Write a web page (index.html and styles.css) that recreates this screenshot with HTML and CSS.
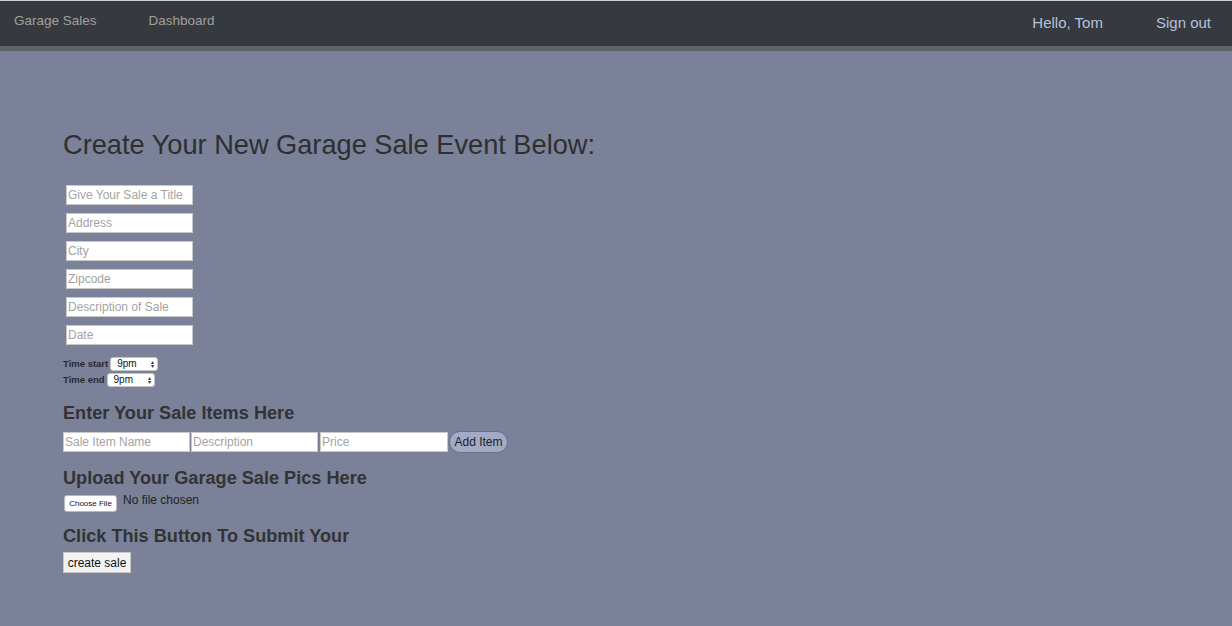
FILE: index.html
```html
<!DOCTYPE html>
<html>
<head>
<meta charset="utf-8">
<link rel="stylesheet" href="styles.css">
</head>
<body>
<nav class="navbar">
  <div class="nav-left">
    <a class="brand">Garage Sales</a>
    <a class="nav-link">Dashboard</a>
  </div>
  <div class="nav-right">
    <a class="nav-user">Hello, Tom</a>
    <a class="nav-user">Sign out</a>
  </div>
</nav>
<main class="content">
  <h1 class="title">Create Your New Garage Sale Event Below:</h1>
  <div class="fields">
    <input class="field" placeholder="Give Your Sale a Title">
    <input class="field" placeholder="Address">
    <input class="field" placeholder="City">
    <input class="field" placeholder="Zipcode">
    <input class="field" placeholder="Description of Sale">
    <input class="field" placeholder="Date">
  </div>
  <div class="times">
    <label class="time-row">Time start <span class="sel">9pm<span class="arrows">▴<br>▾</span></span></label>
    <label class="time-row">Time end <span class="sel">9pm<span class="arrows">▴<br>▾</span></span></label>
  </div>
  <h2 class="sub">Enter Your Sale Items Here</h2>
  <div class="items">
    <input class="item" placeholder="Sale Item Name">
    <input class="item" placeholder="Description">
    <input class="item" placeholder="Price">
    <button class="add">Add Item</button>
  </div>
  <h2 class="sub">Upload Your Garage Sale Pics Here</h2>
  <div class="upload">
    <span class="choose">Choose File</span>
    <span class="nofile">No file chosen</span>
  </div>
  <h2 class="sub">Click This Button To Submit Your</h2>
  <button class="create">create sale</button>
</main>
</body>
</html>
```

FILE: styles.css
```css
html, body {
  margin: 0;
  padding: 0;
}
body {
  background: #7a8199;
  font-family: "Liberation Sans", Arial, sans-serif;
  color: #333;
  height: 626px;
  overflow: hidden;
}
.navbar {
  height: 45px;
  background: #36393e;
  border-top: 1px solid #cfd1d4;
  border-bottom: 5px solid #5f6368;
  display: flex;
  justify-content: space-between;
  align-items: flex-start;
}
.nav-left, .nav-right {
  display: flex;
}
.brand, .nav-link {
  color: #a0a0a0;
  font-size: 13.5px;
  line-height: 16px;
  padding-top: 12px;
}
.brand { margin-left: 14px; }
.nav-link { margin-left: 52px; }
.nav-user {
  color: #b3c2de;
  font-size: 15px;
  line-height: 18px;
  padding-top: 13px;
}
.nav-user + .nav-user { margin-left: 53px; }
.nav-right { margin-right: 21px; }

.content {
  padding: 79px 0 0 63px;
}
.title {
  font-size: 27.2px;
  font-weight: normal;
  margin: 0;
  line-height: 30px;
  color: #2f2f30;
}
.fields {
  display: flex;
  flex-direction: column;
  gap: 8px;
  margin: 25px 0 0 3px;
}
.field {
  width: 127px;
  height: 20px;
  box-sizing: border-box;
  border: 1px solid #c8c8c8;
  background: #fff;
  font-family: "Liberation Sans", Arial, sans-serif;
  font-size: 12px;
  padding: 0 1px;
  margin: 0;
  outline: none;
}
.field::placeholder, .item::placeholder {
  color: #a3a3a3;
}
.times {
  margin-top: 11px;
  display: flex;
  flex-direction: column;
  gap: 1px;
}
.time-row {
  font-size: 9.5px;
  font-weight: bold;
  color: #2a2a2a;
  display: flex;
  align-items: center;
  gap: 2px;
  height: 15px;
}
.sel {
  display: inline-flex;
  justify-content: space-between;
  align-items: center;
  width: 48px;
  height: 14px;
  box-sizing: border-box;
  background: #fff;
  border: 1px solid #c5c5c5;
  border-radius: 3px;
  font-weight: normal;
  font-size: 10px;
  padding: 0 3px 0 6px;
  color: #111;
}
.arrows {
  font-size: 6px;
  line-height: 4px;
  color: #333;
}
.sub {
  font-size: 18.15px;
  font-weight: bold;
  margin: 0;
  line-height: 22px;
  color: #333;
}
.times + .sub { margin-top: 15px; }
.items {
  display: flex;
  align-items: center;
  margin-top: 7px;
  gap: 1px;
}
.item {
  width: 127px;
  height: 20px;
  box-sizing: border-box;
  border: 1px solid #c8c8c8;
  background: #fff;
  font-family: "Liberation Sans", Arial, sans-serif;
  font-size: 12px;
  padding: 0 1px;
  margin: 0;
}
.item:nth-child(3) { margin-left: 1px; width: 128px; }
.add {
  width: 59px;
  height: 22px;
  border-radius: 11px;
  border: 1px solid #6b7089;
  background: #a2aac6;
  font-family: "Liberation Sans", Arial, sans-serif;
  font-size: 12px;
  color: #1e1e1e;
  padding: 0;
}
.items + .sub { margin-top: 14px; }
.upload {
  display: flex;
  align-items: flex-start;
  margin-top: 5px;
  height: 18px;
}
.choose {
  margin-left: 1px;
  margin-top: 1px;
  width: 53px;
  height: 17px;
  box-sizing: border-box;
  background: #fff;
  border: 1px solid #b8b8b8;
  border-radius: 3px;
  font-size: 8px;
  display: flex;
  align-items: center;
  justify-content: center;
  color: #111;
}
.nofile {
  font-size: 12px;
  color: #222;
  margin-left: 6px;
  line-height: 12px;
}
.upload + .sub { margin-top: 13px; }
.create {
  margin-top: 5px;
  width: 68px;
  height: 21px;
  background: #f3f3f3;
  border: 1px solid #c8c8c8;
  border-radius: 0;
  font-family: "Liberation Sans", Arial, sans-serif;
  font-size: 12px;
  color: #111;
  padding: 0;
}
```
